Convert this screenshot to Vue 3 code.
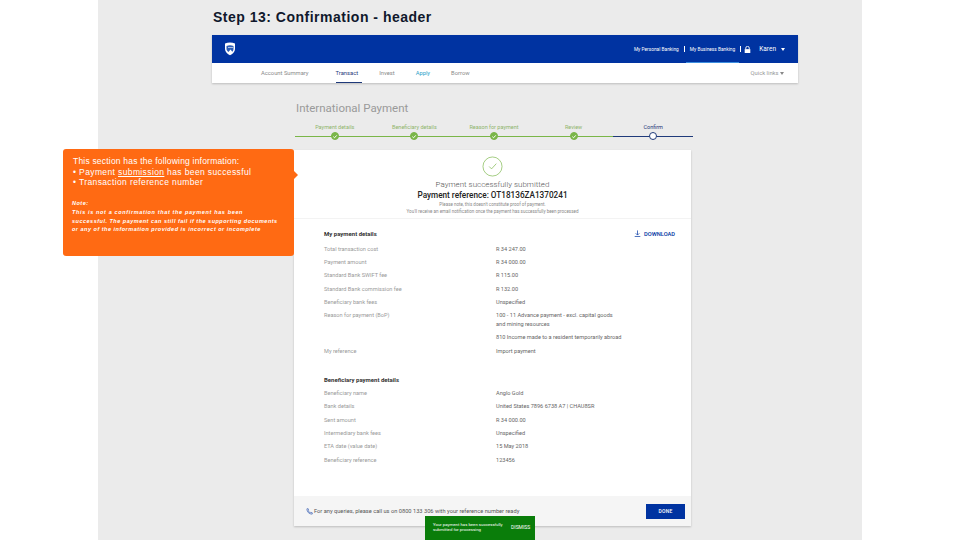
<script setup>
const tabs = [
  { label: 'Account Summary' },
  { label: 'Transact', active: true },
  { label: 'Invest' },
  { label: 'Apply', accent: true },
  { label: 'Borrow' }
]
const steps = [
  { label: 'Payment details', done: true },
  { label: 'Beneficiary details', done: true },
  { label: 'Reason for payment', done: true },
  { label: 'Review', done: true },
  { label: 'Confirm', done: false }
]
const myDetails = [
  ['Total transaction cost', 'R 34 247.00'],
  ['Payment amount', 'R 34 000.00'],
  ['Standard Bank SWIFT fee', 'R 115.00'],
  ['Standard Bank commission fee', 'R 132.00'],
  ['Beneficiary bank fees', 'Unspecified']
]
const benDetails = [
  ['Beneficiary name', 'Anglo Gold'],
  ['Bank details', 'United States 7896 6738 A7 | CHAU8SR'],
  ['Sent amount', 'R 34 000.00'],
  ['Intermediary bank fees', 'Unspecified'],
  ['ETA date (value date)', '15 May 2018'],
  ['Beneficiary reference', '123456']
]
</script>

<template>
  <div class="page">
    <main class="slide">
      <h1 class="title">Step 13: Confirmation - header</h1>

      <section class="app">
        <header class="topbar">
          <svg class="logo" viewBox="0 0 12 14" width="12" height="14">
            <path d="M1 1.500C4 .3 8 .3 11 1.500V7c0 3-2.500 5-5 6.200C3.500 12 1 10 1 7Z" fill="#fff" />
            <path d="M2.500 4c2.300-1 4.700-1 7 0v3c0 1-.5 2-1.200 2.800L6.500 7.500 4.500 10C3.300 9 2.500 8 2.500 7Z" fill="#2a5cb8" />
            <path d="M4 5.500H9" stroke="#fff" stroke-width=".6" />
          </svg>
          <div class="topnav">
            <span>My Personal Banking</span>
            <i class="sep"></i>
            <span class="current">My Business Banking</span>
            <i class="sep"></i>
            <svg class="lock" viewBox="0 0 10 10" width="7" height="7">
              <path d="M2.500 4.500V3a2.500 2.500 0 0 1 5 0v1.500" fill="none" stroke="#fff" stroke-width="1.300" />
              <rect x="1" y="4.500" width="8" height="5.500" fill="#fff" />
            </svg>
            <span class="user">Karen</span>
            <b class="caret white"></b>
          </div>
        </header>
        <nav class="tabs">
          <span
            v-for="t in tabs"
            :key="t.label"
            class="tab"
            :class="{ active: t.active, accent: t.accent }"
          >{{ t.label }}</span>
          <span class="quick">Quick links <b class="caret"></b></span>
        </nav>
      </section>

      <section class="content">
        <h2 class="heading">International Payment</h2>

        <ol class="stepper">
          <li v-for="s in steps" :key="s.label" class="step" :class="{ complete: s.done }">
            <span class="step-label">{{ s.label }}</span>
            <span class="dot">
              <svg v-if="s.done" viewBox="0 0 8 8" width="7" height="7">
                <path d="M1.800 4.200 3.400 5.700 6.300 2.500" fill="none" stroke="#fff" stroke-width="1.300" />
              </svg>
            </span>
          </li>
        </ol>

        <article class="card">
          <div class="summary">
            <svg viewBox="0 0 22 22" width="21" height="21">
              <circle cx="11" cy="11" r="10" fill="none" stroke="#7ab648" stroke-width=".7" />
              <path d="M7.500 11 10 13.500 15 8" fill="none" stroke="#7ab648" stroke-width=".7" />
            </svg>
            <p class="sum-title">Payment successfully submitted</p>
            <p class="sum-ref">Payment reference: OT18136ZA1370241</p>
            <p class="sum-note">Please note, this doesn't constitute proof of payment.</p>
            <p class="sum-note">You'll receive an email notification once the payment has successfully been processed</p>
          </div>

          <div class="details">
            <div class="details-head">
              <h3>My payment details</h3>
              <span class="download">
                <svg viewBox="0 0 8 8" width="7" height="7">
                  <path d="M4 .5V5.500M2 3.800 4 5.800 6 3.800M.8 7.400H7.200" fill="none" stroke="#0033a1" stroke-width=".8" />
                </svg>
                DOWNLOAD
              </span>
            </div>
            <div v-for="r in myDetails" :key="r[0]" class="row">
              <span>{{ r[0] }}</span><span class="val">{{ r[1] }}</span>
            </div>
            <div class="row tall">
              <span>Reason for payment (BoP)</span>
              <span class="val">
                <span class="val-line first">100 - 11 Advance payment - excl. capital goods</span>
                <span class="val-line">and mining resources</span>
                <span class="val-line gap">810 Income made to a resident temporarily abroad</span>
              </span>
            </div>
            <div class="row">
              <span>My reference</span><span class="val">Import payment</span>
            </div>

            <h3 class="ben-head">Beneficiary payment details</h3>
            <div v-for="r in benDetails" :key="r[0]" class="row">
              <span>{{ r[0] }}</span><span class="val">{{ r[1] }}</span>
            </div>
          </div>

          <footer class="card-foot">
            <svg viewBox="0 0 8 8" width="7" height="7">
              <path d="M1 1C1 4.500 3.500 7 7 7L7.300 5.600 5.500 4.800 4.800 5.500C3.800 5 3 4.200 2.500 3.200L3.200 2.500 2.400.7Z" fill="none" stroke="#0033a1" stroke-width=".6" />
            </svg>
            <span class="foot-text">For any queries, please call us on 0800 133 306 with your reference number ready</span>
            <button class="finish" type="button">DONE</button>
          </footer>
        </article>
      </section>

      <aside class="callout">
        <p class="intro">This section has the following information:</p>
        <p>• Payment <u>submission</u> has been successful</p>
        <p>• Transaction reference number</p>
        <div class="note">
          <p>Note:</p>
          <p class="wide">This is not a confirmation that the payment has been</p>
          <p>successful. The payment can still fail if the supporting documents</p>
          <p>or any of the information provided is incorrect or incomplete</p>
        </div>
      </aside>

      <div class="toast">
        <span class="toast-msg">Your payment has been successfully submitted for processing</span>
        <span class="toast-act">DISMISS</span>
      </div>
    </main>
  </div>
</template>

<style>
html, body { margin: 0; background: #fff; }
</style>

<style scoped>
.page {
  width: 960px;
  height: 540px;
  overflow: hidden;
  background: #fff;
  font-family: Roboto, "Liberation Sans", sans-serif;
}
.slide {
  position: relative;
  width: 764px;
  height: 540px;
  margin-left: 98px;
  padding-left: 114px;
  box-sizing: border-box;
  background: #ebebeb;
}
.title {
  margin: 0;
  padding: 9px 0 0 1px;
  height: 35px;
  box-sizing: border-box;
  font: 700 14px/17px "Liberation Sans", Arial, sans-serif;
  letter-spacing: .5px;
  color: #10182c;
}
.app { width: 586px; box-shadow: 0 1px 2px rgba(0,0,0,.2); }
.topbar {
  height: 28px;
  background: #0033a1;
  display: flex;
  align-items: center;
  justify-content: space-between;
  padding: 0 13px 0 12px;
}
.logo { margin-top: -1px; }
.topnav {
  display: flex;
  align-items: center;
  gap: 5px;
  font-size: 4.800px;
  color: #fff;
}
.sep { width: 1px; height: 6px; background: #fff; }
.current { position: relative; }
.current::after {
  content: "";
  position: absolute;
  left: -4px;
  right: -4px;
  top: 15px;
  height: 1px;
  background: #3d8fe0;
}
.lock { margin-left: -2px; }
.user { font-size: 6.500px; margin-left: 3px; }
.caret {
  display: inline-block;
  width: 0;
  height: 0;
  border: 2.500px solid transparent;
  border-top: 3px solid #888;
  border-bottom: 0;
  vertical-align: middle;
}
.caret.white { border-top-color: #fff; }
.tabs {
  height: 20px;
  background: #fff;
  display: flex;
  align-items: center;
  padding: 0 14px 0 49px;
  font-size: 5.800px;
  color: #8a8a8a;
}
.tab { position: relative; margin-right: 21px; line-height: 20px; }
.tab:first-child { margin-right: 27px; }
.tab.active { color: #1f3a7a; }
.tab.active::after {
  content: "";
  position: absolute;
  left: 0;
  right: -4px;
  bottom: 0;
  height: 1px;
  background: #1f3a7a;
}
.tab.accent { color: #2a9fc9; }
.quick { margin-left: auto; color: #999; }

.content { width: 398px; margin-left: 83px; }
.heading {
  margin: 0;
  padding: 18px 0 0 1px;
  height: 34px;
  box-sizing: border-box;
  font-size: 11.500px;
  line-height: 14px;
  font-weight: 400;
  color: #9a9a9a;
}
.stepper {
  list-style: none;
  display: flex;
  margin: 0;
  padding: 0;
  height: 33px;
}
.step {
  position: relative;
  flex: 1;
  display: flex;
  flex-direction: column;
  align-items: center;
  font-size: 5.500px;
  color: #1f3a7a;
}
.step::before {
  content: "";
  position: absolute;
  left: 0;
  right: 0;
  top: 19px;
  height: 1px;
  background: #1f3a7a;
}
.step.complete { color: #8fb56b; }
.step.complete::before { background: #7ab648; }
.step-label { height: 15px; line-height: 8px; padding-top: 6px; box-sizing: border-box; }
.dot {
  position: relative;
  width: 8px;
  height: 8px;
  border-radius: 50%;
  background: #fff;
  border: 1px solid #1f3a7a;
  box-sizing: border-box;
  display: flex;
  align-items: center;
  justify-content: center;
}
.complete .dot { background: #7ab648; border-color: #7ab648; }

.card {
  width: 397px;
  height: 376px;
  margin-left: -1px;
  background: #fff;
  box-shadow: 0 1px 2px rgba(0,0,0,.2);
  display: flex;
  flex-direction: column;
}
.summary {
  height: 69px;
  padding-top: 6px;
  box-sizing: border-box;
  display: flex;
  flex-direction: column;
  align-items: center;
  text-align: center;
  border-bottom: 1px solid #f3f3f3;
}
.summary p { margin: 0; }
.sum-title { font-size: 8px; line-height: 11px; margin-top: 2px !important; color: #555; font-weight: 300; }
.sum-ref { font-size: 8.200px; line-height: 11px; color: #222; font-weight: 500; }
.sum-note { font-size: 4.500px; line-height: 7px; color: #888; }
.details { flex: 1; padding: 8px 16px 0 30px; }
.details-head {
  display: flex;
  justify-content: space-between;
  align-items: center;
  height: 13px;
  margin-bottom: 2.500px;
}
h3 {
  margin: 0;
  font-size: 6px;
  line-height: 13px;
  font-weight: 700;
  color: #333;
}
.download {
  display: flex;
  align-items: center;
  gap: 3px;
  font-size: 5.700px;
  font-weight: 500;
  color: #0033a1;
}
.row {
  display: grid;
  grid-template-columns: 172px 1fr;
  height: 13.400px;
  line-height: 13.400px;
  font-size: 5.600px;
  color: #9a9a9a;
}
.row.tall { height: 36px; }
.val { color: #666; }
.val-line { display: block; line-height: 9px; }
.val-line.first { padding-top: 2px; }
.val-line.gap { padding-top: 4px; }
.row.tall .val { line-height: 9px; }
.ben-head { margin-top: 14px; margin-bottom: 1px; }
.card-foot {
  height: 30px;
  background: #f5f5f5;
  display: flex;
  align-items: center;
  padding: 0 6px 0 12px;
  font-size: 5.700px;
  color: #555;
}
.foot-text { margin-left: 1px; }
.finish {
  margin-left: auto;
  width: 39px;
  height: 15px;
  padding: 0;
  border: 0;
  background: #0033a1;
  color: #fff;
  font: 500 5px Roboto, sans-serif;
  letter-spacing: .2px;
}

.callout {
  position: absolute;
  left: -35px;
  top: 149px;
  width: 231px;
  height: 107px;
  box-sizing: border-box;
  padding: 7px 10px;
  background: #ff6a13;
  border-radius: 3px;
  color: #fff;
  font: 400 8.500px/10.700px "Liberation Sans", Arial, sans-serif;
  letter-spacing: .38px;
}
.callout::after {
  content: "";
  position: absolute;
  right: -4px;
  top: 22px;
  border-left: 4px solid #ff6a13;
  border-top: 4px solid transparent;
  border-bottom: 4px solid transparent;
}
.callout p { margin: 0; white-space: nowrap; }
.callout .intro { letter-spacing: .2px; }
.note {
  margin-top: 11px;
  margin-left: -1px;
  font-size: 5.500px;
  line-height: 8.700px;
  font-weight: 700;
  font-style: italic;
  letter-spacing: .5px;
}
.callout .wide { letter-spacing: .64px; }
.toast {
  position: absolute;
  left: 327px;
  top: 516px;
  width: 110px;
  height: 24px;
  box-sizing: border-box;
  padding: 6px 4px 0 8px;
  background: #0a7d0a;
  color: #fff;
  font-size: 4.300px;
  line-height: 5px;
  display: flex;
  align-items: flex-start;
  gap: 5px;
}
.toast-msg { width: 73px; }
.toast-act { margin-top: 3px; font-size: 5px; }
</style>
